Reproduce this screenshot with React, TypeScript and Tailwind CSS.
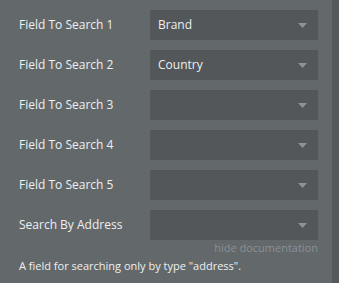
const fields = [
  { label: 'Field To Search 1', value: 'Brand' },
  { label: 'Field To Search 2', value: 'Country' },
  { label: 'Field To Search 3', value: '' },
  { label: 'Field To Search 4', value: '' },
  { label: 'Field To Search 5', value: '' },
  { label: 'Search By Address', value: '' },
]

function Dropdown({ value }: { value: string }) {
  return (
    <div className="flex h-[30px] w-[168px] items-center justify-between bg-[#53575a] pl-2 pr-[11px]">
      <span className="text-[12px] text-[#eceeef]">{value}</span>
      <svg width="9" height="5" viewBox="0 0 9 5">
        <path d="M0 0 H9 L4.5 5 Z" fill="#8f9396" />
      </svg>
    </div>
  )
}

export default function App() {
  return (
    <div
      className="flex h-[283px] w-[339px] bg-[#55595c]"
      style={{ fontFamily: '"Open Sans", "Noto Sans", sans-serif' }}
    >
      <div className="flex w-[332px] flex-col bg-[#63686b] pl-[19px] pt-[10px]">
        <div className="flex flex-col gap-[10px]">
          {fields.map(f => (
            <div key={f.label} className="flex h-[30px] items-center">
              <span className="w-[131px] text-[12px] text-[#eef0f1]">{f.label}</span>
              <Dropdown value={f.value} />
            </div>
          ))}
        </div>
        <div className="mt-0 w-[299px] text-right text-[11px] leading-[16px] text-[#8b9093]">
          hide documentation
        </div>
        <div className="mt-[2px] text-[11px] leading-[16px] text-[#eef0f1]">
          A field for searching only by type "address".
        </div>
      </div>
    </div>
  )
}
